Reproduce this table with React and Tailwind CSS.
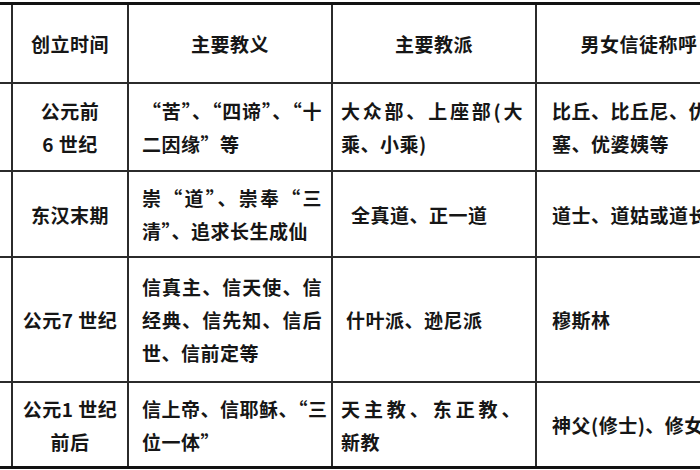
import React from 'react';

const font = { fontFamily: '"Noto Sans CJK SC", "Noto Sans", sans-serif' };

// one line of text; "full" spreads it across the cell width
const Line = ({ children, full }) => (
  <div className={'whitespace-nowrap ' + (full ? 'text-justify [text-align-last:justify]' : '')}>
    {children}
  </div>
);

const Cell = ({ children, className = '', last }) => (
  <div
    className={
      'flex flex-col justify-center whitespace-nowrap border-l-2 border-[#2b2b2b] ' +
      (last ? '' : 'border-b-2 ') +
      className
    }
  >
    {children}
  </div>
);

const Edge = ({ last }) => (
  <div className={last ? '' : 'border-b-2 border-[#2b2b2b]'}></div>
);

const App = () => {
  return (
    <div className="w-[700px] h-[470px] overflow-hidden bg-white pt-[2px]" style={font}>
      <div className="w-[741px] grid grid-cols-[11px_116px_204px_204px_206px] grid-rows-[79px_88px_86px_125px_83px] border-y-[3px] border-[#111] text-[19px] leading-[33px] tracking-[0.5px] font-semibold text-[#161616]">
        {/* header */}
        <Edge />
        <Cell className="items-center">创立时间</Cell>
        <Cell className="items-center">主要教义</Cell>
        <Cell className="items-center">主要教派</Cell>
        <Cell className="items-center">男女信徒称呼</Cell>

        {/* 佛教 */}
        <Edge />
        <Cell className="items-center text-center">
          <Line>公元前</Line>
          <Line>6 世纪</Line>
        </Cell>
        <Cell className="pl-[13px] pr-[9px]">
          <Line full>“苦”、“四谛”、“十</Line>
          <Line>二因缘”等</Line>
        </Cell>
        <Cell className="pl-[8px] pr-[12px]">
          <Line full>大众部、上座部(大</Line>
          <Line>乘、小乘)</Line>
        </Cell>
        <Cell className="pl-[15px] pr-[10px]">
          <Line>比丘、比丘尼、优婆</Line>
          <Line>塞、优婆姨等</Line>
        </Cell>

        {/* 道教 */}
        <Edge />
        <Cell className="items-center">东汉末期</Cell>
        <Cell className="pl-[13px] pr-[9px]">
          <Line full>崇“道”、崇奉“三</Line>
          <Line>清”、追求长生成仙</Line>
        </Cell>
        <Cell className="pl-[18px]">全真道、正一道</Cell>
        <Cell className="pl-[15px]">道士、道姑或道长</Cell>

        {/* 伊斯兰教 */}
        <Edge />
        <Cell className="items-center">公元7 世纪</Cell>
        <Cell className="pl-[13px] pr-[9px]">
          <Line full>信真主、信天使、信</Line>
          <Line full>经典、信先知、信后</Line>
          <Line>世、信前定等</Line>
        </Cell>
        <Cell className="pl-[13px]">什叶派、逊尼派</Cell>
        <Cell className="pl-[15px]">穆斯林</Cell>

        {/* 基督教 */}
        <Edge last />
        <Cell last className="items-center text-center">
          <Line>公元1 世纪</Line>
          <Line>前后</Line>
        </Cell>
        <Cell last className="pl-[13px] pr-[9px]">
          <Line full>信上帝、信耶稣、“三</Line>
          <Line>位一体”</Line>
        </Cell>
        <Cell last className="pl-[8px] pr-[14px]">
          <Line full>天主教、东正教、</Line>
          <Line>新教</Line>
        </Cell>
        <Cell last className="pl-[15px]">神父(修士)、修女</Cell>
      </div>
    </div>
  );
};

export default App;
